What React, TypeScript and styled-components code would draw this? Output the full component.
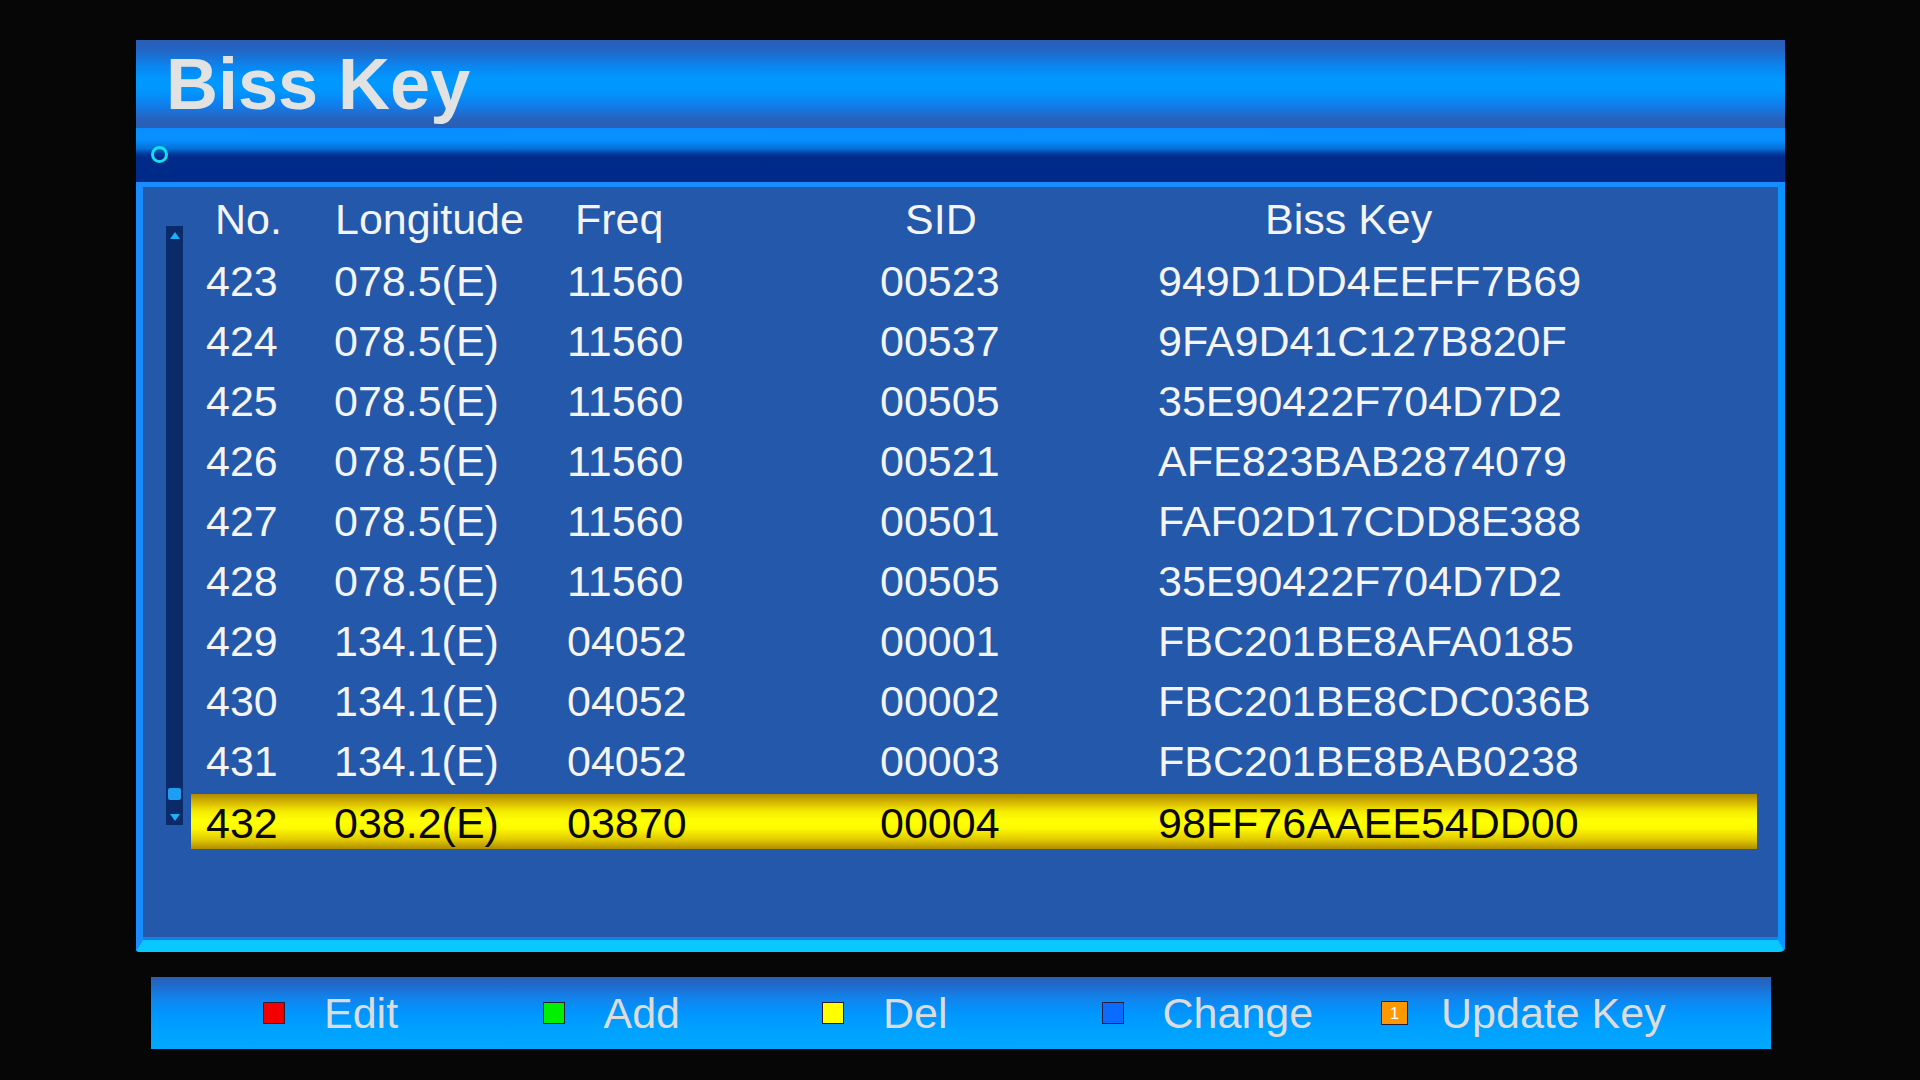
import React from "react";
import styled, { createGlobalStyle } from "styled-components";

const GlobalStyle = createGlobalStyle`
  html, body {
    margin: 0;
    padding: 0;
    background: #060606;
  }
  * { box-sizing: border-box; }
`;

const FONT = `"Liberation Sans", Arial, Helvetica, sans-serif`;

const Screen = styled.div`
  width: 1920px;
  height: 1080px;
  background: #060606;
  padding: 40px 0 0 136px;
  display: flex;
  flex-direction: column;
  font-family: ${FONT};
  overflow: hidden;
`;

const Window = styled.div`
  width: 1649px;
  display: flex;
  flex-direction: column;
`;

const TitleBar = styled.div`
  height: 88px;
  display: flex;
  align-items: center;
  padding-left: 30px;
  background: linear-gradient(
    180deg,
    #2c5db4 0%,
    #2266c6 12%,
    #0a86f0 30%,
    #0098ff 45%,
    #0096ff 58%,
    #127cea 75%,
    #2862bd 90%,
    #2b5db3 100%
  );
`;

const Title = styled.h1`
  margin: 0;
  font-family: ${FONT};
  font-weight: 700;
  font-size: 72px;
  line-height: 1;
  color: #e2e2e2;
  letter-spacing: 0;
`;

const SubBar = styled.div`
  height: 54px;
  display: flex;
  align-items: center;
  padding-left: 15px;
  background: linear-gradient(
    180deg,
    #0a8eff 0%,
    #0890ff 22%,
    #0570d8 38%,
    #003a9c 48%,
    #002b8a 55%,
    #002a88 100%
  );
`;

const Ring = styled.span`
  width: 17px;
  height: 17px;
  border-radius: 50%;
  border: 3px solid #12e0f0;
  margin-top: -2px;
`;

const Panel = styled.div`
  height: 770px;
  background: #2358aa;
  border-top: 5px solid #1a8cff;
  border-left: 7px solid #1a8cff;
  border-right: 7px solid #0a92ff;
  border-bottom: 12px solid #08c8ff;
  border-bottom-right-radius: 5px;
  border-bottom-left-radius: 3px;
  box-shadow: inset 0 -3px 0 #1a7ce8;
  display: flex;
  align-items: flex-start;
  padding: 5px 21px 0 23px;
  gap: 8px;
`;

const ScrollTrack = styled.div`
  width: 17px;
  height: 599px;
  margin-top: 34px;
  background: #0b2a6a;
  display: flex;
  flex-direction: column;
  align-items: center;
  justify-content: space-between;
  padding: 6px 0 4px;
`;

const ScrollEnd = styled.div`
  display: flex;
  flex-direction: column;
  align-items: center;
  gap: 14px;
`;

const Arrow = styled.span<{ $down?: boolean }>`
  width: 0;
  height: 0;
  border-left: 5px solid transparent;
  border-right: 5px solid transparent;
  ${(p) =>
    p.$down
      ? "border-top: 7px solid #22aef5;"
      : "border-bottom: 7px solid #22aef5;"}
`;

const Thumb = styled.span`
  width: 13px;
  height: 12px;
  background: #1c9ef2;
  border-radius: 2px;
`;

const Table = styled.div`
  width: 1566px;
  display: flex;
  flex-direction: column;
  gap: 5px;
`;

const Row = styled.div<{ $selected?: boolean; $header?: boolean }>`
  height: 55px;
  display: grid;
  grid-template-columns: 128px 233px 313px 278px 1fr;
  align-items: center;
  padding-left: 15px;
  padding-top: ${(p) => (p.$selected ? "3px" : "0")};
  font-size: 43px;
  line-height: 1;
  color: ${(p) => (p.$selected ? "#0a0a0a" : "#f4f4f4")};
  margin-bottom: ${(p) => (p.$header ? "2px" : "0")};
  background: ${(p) =>
    p.$selected
      ? `linear-gradient(180deg, #ad8800 0%, #d4b400 14%, #f4ec00 32%, #ffff06 48%, #fdfa00 62%, #e4cc00 82%, #b08c00 100%)`
      : "transparent"};
`;

const Cell = styled.span`
  white-space: nowrap;
`;

const HeadCell = styled.span<{ $shift: number }>`
  white-space: nowrap;
  padding-left: ${(p) => p.$shift}px;
`;

const Footer = styled.div`
  width: 1620px;
  height: 72px;
  margin: 25px 0 0 15px;
  display: grid;
  grid-template-columns: repeat(4, 279.5px) 1fr;
  align-items: center;
  padding-left: 112px;
  background: linear-gradient(
    180deg,
    #2b5fb5 0%,
    #2168c8 10%,
    #1282ea 28%,
    #0096ff 50%,
    #00a2ff 75%,
    #00a8ff 100%
  );
`;

const Hint = styled.div`
  display: flex;
  align-items: center;
  font-size: 43px;
  line-height: 1;
  color: #dcdcdc;
`;

const Key = styled.span<{ $color: string; $wide?: boolean }>`
  width: ${(p) => (p.$wide ? "27px" : "22px")};
  height: ${(p) => (p.$wide ? "24px" : "22px")};
  margin-right: ${(p) => (p.$wide ? "33px" : "39px")};
  background: ${(p) => p.$color};
  border: 1px solid #2a1e3a;
  display: flex;
  align-items: center;
  justify-content: center;
  font-size: 17px;
  font-weight: 400;
  color: #ffffff;
`;

type Entry = {
  no: string;
  lon: string;
  freq: string;
  sid: string;
  key: string;
};

const entries: Entry[] = [
  { no: "423", lon: "078.5(E)", freq: "11560", sid: "00523", key: "949D1DD4EEFF7B69" },
  { no: "424", lon: "078.5(E)", freq: "11560", sid: "00537", key: "9FA9D41C127B820F" },
  { no: "425", lon: "078.5(E)", freq: "11560", sid: "00505", key: "35E90422F704D7D2" },
  { no: "426", lon: "078.5(E)", freq: "11560", sid: "00521", key: "AFE823BAB2874079" },
  { no: "427", lon: "078.5(E)", freq: "11560", sid: "00501", key: "FAF02D17CDD8E388" },
  { no: "428", lon: "078.5(E)", freq: "11560", sid: "00505", key: "35E90422F704D7D2" },
  { no: "429", lon: "134.1(E)", freq: "04052", sid: "00001", key: "FBC201BE8AFA0185" },
  { no: "430", lon: "134.1(E)", freq: "04052", sid: "00002", key: "FBC201BE8CDC036B" },
  { no: "431", lon: "134.1(E)", freq: "04052", sid: "00003", key: "FBC201BE8BAB0238" },
  { no: "432", lon: "038.2(E)", freq: "03870", sid: "00004", key: "98FF76AAEE54DD00" },
];

const selectedNo = "432";

const headers: { label: string; shift: number }[] = [
  { label: "No.", shift: 9 },
  { label: "Longitude", shift: 1 },
  { label: "Freq", shift: 8 },
  { label: "SID", shift: 25 },
  { label: "Biss Key", shift: 107 },
];

const hints: { label: string; color: string; badge?: string }[] = [
  { label: "Edit", color: "#f20000" },
  { label: "Add", color: "#00f000" },
  { label: "Del", color: "#ffff00" },
  { label: "Change", color: "#0a6cff" },
  { label: "Update Key", color: "#ff9800", badge: "1" },
];

export default function App() {
  return (
    <>
      <GlobalStyle />
      <Screen>
        <Window>
          <TitleBar>
            <Title>Biss Key</Title>
          </TitleBar>
          <SubBar>
            <Ring />
          </SubBar>
          <Panel>
            <ScrollTrack>
              <Arrow />
              <ScrollEnd>
                <Thumb />
                <Arrow $down />
              </ScrollEnd>
            </ScrollTrack>
            <Table>
              <Row $header>
                {headers.map((h) => (
                  <HeadCell key={h.label} $shift={h.shift}>
                    {h.label}
                  </HeadCell>
                ))}
              </Row>
              {entries.map((e) => (
                <Row key={e.no} $selected={e.no === selectedNo}>
                  <Cell>{e.no}</Cell>
                  <Cell>{e.lon}</Cell>
                  <Cell>{e.freq}</Cell>
                  <Cell>{e.sid}</Cell>
                  <Cell>{e.key}</Cell>
                </Row>
              ))}
            </Table>
          </Panel>
        </Window>
        <Footer>
          {hints.map((h) => (
            <Hint key={h.label}>
              <Key $color={h.color} $wide={!!h.badge}>
                {h.badge}
              </Key>
              {h.label}
            </Hint>
          ))}
        </Footer>
      </Screen>
    </>
  );
}
